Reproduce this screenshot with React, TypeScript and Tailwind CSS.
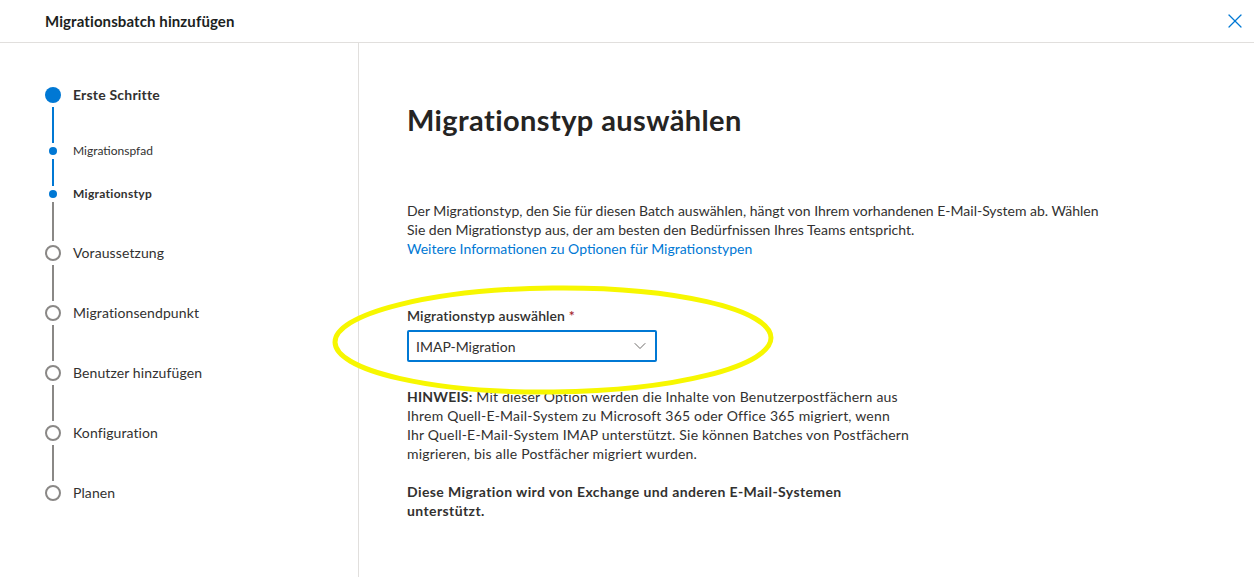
import { ChevronDown, X } from "lucide-react";

type Step = { label: string; kind: "main" | "sub"; state: "done" | "current" | "todo"; lineBefore?: number; lineColor?: string };

const steps: Step[] = [
  { label: "Erste Schritte", kind: "main", state: "current" },
  { label: "Migrationspfad", kind: "sub", state: "done", lineBefore: 36, lineColor: "bg-[#0078d4]" },
  { label: "Migrationstyp", kind: "sub", state: "current", lineBefore: 27, lineColor: "bg-[#0078d4]" },
  { label: "Voraussetzung", kind: "main", state: "todo", lineBefore: 39, lineColor: "bg-[#8a8886]" },
  { label: "Migrationsendpunkt", kind: "main", state: "todo", lineBefore: 36, lineColor: "bg-[#8a8886]" },
  { label: "Benutzer hinzufügen", kind: "main", state: "todo", lineBefore: 36, lineColor: "bg-[#8a8886]" },
  { label: "Konfiguration", kind: "main", state: "todo", lineBefore: 36, lineColor: "bg-[#8a8886]" },
  { label: "Planen", kind: "main", state: "todo", lineBefore: 36, lineColor: "bg-[#8a8886]" },
];

function Indicator({ step }: { step: Step }) {
  if (step.kind === "sub") {
    return <div className="h-2 w-2 rounded-full bg-[#0078d4]" />;
  }
  if (step.state === "current") {
    return <div className="h-4 w-4 rounded-full bg-[#0078d4]" />;
  }
  return <div className="h-4 w-4 rounded-full border-2 border-[#8a8886] bg-white" />;
}

function Stepper() {
  return (
    <div className="flex flex-col">
      {steps.map((s) => (
        <div key={s.label} className="flex flex-col">
          {s.lineBefore && (
            <div className="flex w-4 justify-center py-1">
              <div className={`w-[2px] ${s.lineColor}`} style={{ height: s.lineBefore }} />
            </div>
          )}
          <div className="flex items-center gap-3">
            <div className="flex w-4 justify-center">
              <Indicator step={s} />
            </div>
            {s.kind === "sub" ? (
              <span className={`text-[12px] leading-2 text-[#323130] ${s.state === "current" ? "font-bold tracking-[0.3px]" : ""}`}>
                {s.label}
              </span>
            ) : (
              <span className={`text-[14px] leading-4 text-[#323130] ${s.state === "current" ? "font-bold tracking-[0.2px]" : "tracking-[0.1px]"}`}>
                {s.label}
              </span>
            )}
          </div>
        </div>
      ))}
    </div>
  );
}

export default function App() {
  return (
    <div className="relative flex h-[577px] w-full flex-col overflow-hidden bg-white font-['Lato','Open_Sans',sans-serif] text-[#323130]">
      <header className="flex h-[43px] shrink-0 items-center justify-between border-b border-[#e1dfdd] pl-[45px] pr-[7px]">
        <h1 className="text-[15px] font-bold tracking-[0.1px] text-[#201f1e]">Migrationsbatch hinzufügen</h1>
        <X className="h-[24px] w-[24px] text-[#0078d4]" strokeWidth={1.2} />
      </header>

      <div className="flex flex-1">
        <aside className="w-[359px] shrink-0 border-r border-[#e1dfdd] pl-[45px] pt-[44px]">
          <Stepper />
        </aside>

        <main className="flex-1 pl-[48px] pt-[59px]">
          <h2 className="text-[29px] font-bold leading-9 tracking-[0.4px] text-[#252423]">Migrationstyp auswählen</h2>

          <p className="mt-[63px] text-[14px] leading-[19px] text-[#323130]">
            Der Migrationstyp, den Sie für diesen Batch auswählen, hängt von Ihrem vorhandenen E-Mail-System ab. Wählen
            <br />
            Sie den Migrationstyp aus, der am besten den Bedürfnissen Ihres Teams entspricht.
            <br />
            <a className="text-[#0078d4]">Weitere Informationen zu Optionen für Migrationstypen</a>
          </p>

          <div className="mt-[48px] flex flex-col gap-1">
            <label className="text-[14px] font-semibold leading-5 tracking-[0.1px] text-[#323130]">
              Migrationstyp auswählen <span className="text-[#a4262c]">*</span>
            </label>
            <div className="flex h-[32px] w-[250px] items-center justify-between rounded-[2px] border-2 border-[#0078d4] pl-[7px] pr-[5px]">
              <span className="text-[14px] text-[#323130]">IMAP-Migration</span>
              <ChevronDown className="h-[20px] w-[20px] text-[#605e5c]" strokeWidth={1.1} />
            </div>
          </div>

          <p className="mt-[25px] text-[14px] leading-[19px] tracking-[0.2px] text-[#323130]">
            <span className="font-bold">HINWEIS:</span> Mit dieser Option werden die Inhalte von Benutzerpostfächern aus
            <br />
            Ihrem Quell-E-Mail-System zu Microsoft 365 oder Office 365 migriert, wenn
            <br />
            Ihr Quell-E-Mail-System IMAP unterstützt. Sie können Batches von Postfächern
            <br />
            migrieren, bis alle Postfächer migriert wurden.
          </p>

          <p className="mt-[19px] text-[14px] font-bold leading-[19px] tracking-[0.4px] text-[#323130]">
            Diese Migration wird von Exchange und anderen E-Mail-Systemen
            <br />
            unterstützt.
          </p>
        </main>
      </div>

      <svg className="pointer-events-none absolute left-[326px] top-[280px]" width="456" height="120" viewBox="0 0 456 120">
        <ellipse cx="227" cy="60" rx="218" ry="52" fill="none" stroke="#f7f700" strokeWidth="5" transform="rotate(-0.6 227 60)" />
      </svg>
    </div>
  );
}
